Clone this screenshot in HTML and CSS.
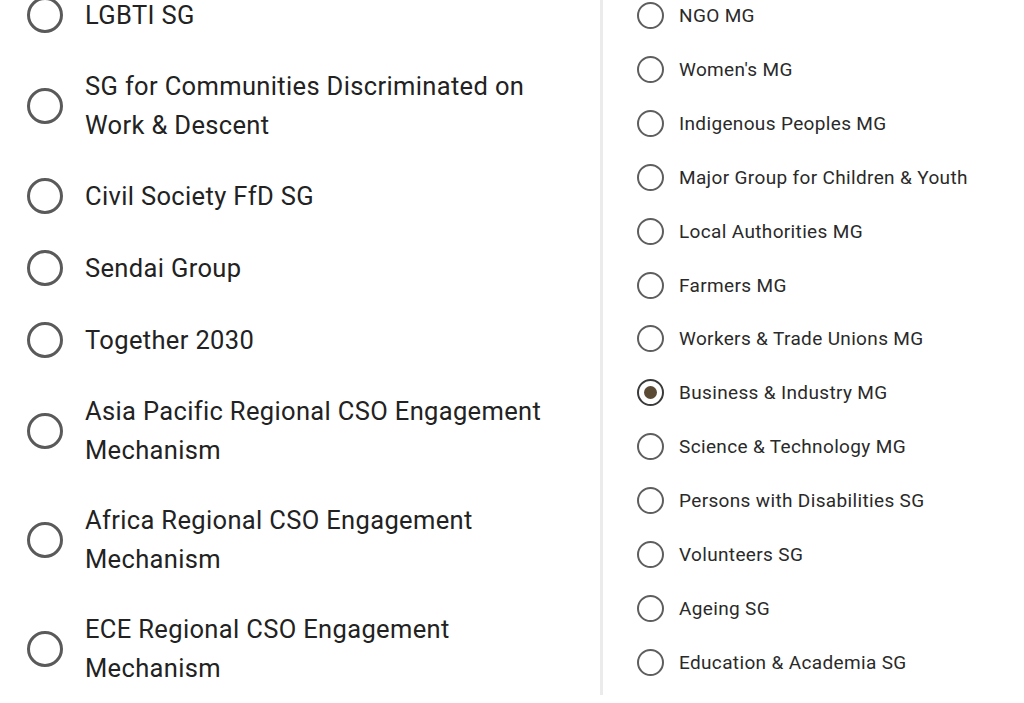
FILE: index.html
```html
<!DOCTYPE html>
<html lang="en">
<head>
  <meta charset="UTF-8" />
  <meta name="viewport" content="width=device-width, initial-scale=1.0" />
  <title>Constituency selection</title>
  <link rel="stylesheet" href="styles.css">
</head>
<body>
  <div class="picker">
    <!-- Left column: stakeholder groups & regional mechanisms -->
    <div class="group-list big">
      <label class="option"><input type="radio" name="left" /><span>LGBTI SG</span></label>
      <label class="option"><input type="radio" name="left" /><span>SG for Communities Discriminated on Work &amp; Descent</span></label>
      <label class="option"><input type="radio" name="left" /><span>Civil Society FfD SG</span></label>
      <label class="option"><input type="radio" name="left" /><span>Sendai Group</span></label>
      <label class="option"><input type="radio" name="left" /><span>Together 2030</span></label>
      <label class="option"><input type="radio" name="left" /><span>Asia Pacific Regional CSO Engagement Mechanism</span></label>
      <label class="option"><input type="radio" name="left" /><span>Africa Regional CSO Engagement Mechanism</span></label>
      <label class="option"><input type="radio" name="left" /><span>ECE Regional CSO Engagement Mechanism</span></label>
    </div>

    <!-- Right column: major groups -->
    <div class="group-list small">
      <label class="option"><input type="radio" name="right" /><span>NGO MG</span></label>
      <label class="option"><input type="radio" name="right" /><span>Women's MG</span></label>
      <label class="option"><input type="radio" name="right" /><span>Indigenous Peoples MG</span></label>
      <label class="option"><input type="radio" name="right" /><span>Major Group for Children &amp; Youth</span></label>
      <label class="option"><input type="radio" name="right" /><span>Local Authorities MG</span></label>
      <label class="option"><input type="radio" name="right" /><span>Farmers MG</span></label>
      <label class="option"><input type="radio" name="right" /><span>Workers &amp; Trade Unions MG</span></label>
      <label class="option"><input type="radio" name="right" checked /><span>Business &amp; Industry MG</span></label>
      <label class="option"><input type="radio" name="right" /><span>Science &amp; Technology MG</span></label>
      <label class="option"><input type="radio" name="right" /><span>Persons with Disabilities SG</span></label>
      <label class="option"><input type="radio" name="right" /><span>Volunteers SG</span></label>
      <label class="option"><input type="radio" name="right" /><span>Ageing SG</span></label>
      <label class="option"><input type="radio" name="right" /><span>Education &amp; Academia SG</span></label>
    </div>
  </div>
</body>
</html>
```

FILE: styles.css
```css
html, body {
  margin: 0;
  background: #fff;
  overflow: hidden;
}
body {
  font-family: Roboto, 'Liberation Sans', sans-serif;
  color: #222;
}
.picker {
  display: flex;
  align-items: flex-start;
}
.group-list {
  display: flex;
  flex-direction: column;
}
.option {
  display: flex;
  align-items: center;
  flex-shrink: 0;
  box-sizing: border-box;
  cursor: pointer;
}
.option input {
  appearance: none;
  -webkit-appearance: none;
  margin: 0;
  flex-shrink: 0;
  border-radius: 50%;
  background: #fff;
  display: grid;
  place-content: center;
}
.option input:checked::before {
  content: "";
  border-radius: 50%;
  background: #5b4a34;
}

/* left column */
.big {
  width: 600px;
  margin-top: -21px;
  padding-left: 27px;
  box-sizing: border-box;
}
.big .option {
  padding: 16px 0;
  min-height: 72px;
  gap: 22px;
  font-size: 25.5px;
  letter-spacing: 0.35px;
  line-height: 38.5px;
}
.big .option span {
  max-width: 480px;
}
.big .option input {
  width: 36px;
  height: 36px;
  border: 3.5px solid #5a5a5a;
  box-sizing: border-box;
}

/* right column */
.small {
  border-left: 3px solid #ebebeb;
  height: 706px;
  margin-top: -11px;
  padding-left: 34px;
  box-sizing: border-box;
  flex: 1;
  overflow: hidden;
}
.small .option {
  height: 53.85px;
  gap: 15px;
  font-size: 19px;
  letter-spacing: 0.35px;
  color: #2a2a2a;
}
.small .option input {
  width: 27px;
  height: 27px;
  border: 2.5px solid #5e5e5e;
  box-sizing: border-box;
}
.small .option input:checked {
  border-color: #3a3a3a;
}
.small .option input:checked::before {
  width: 13px;
  height: 13px;
}
```
